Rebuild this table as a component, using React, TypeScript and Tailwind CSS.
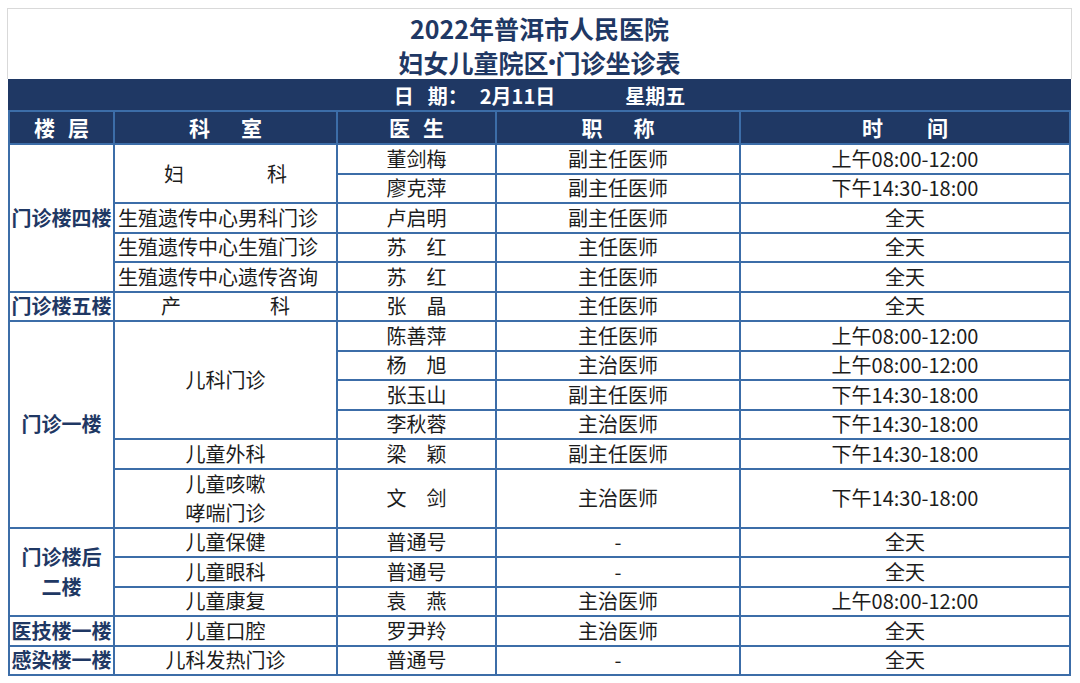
import React from "react";

const navy = "text-[#1f3864]";

type Cell = { pos: string; content: React.ReactNode; kind?: "floor" | "dept" | "deptL" | "text" };

function Spread({ a, b, gap }: { a: string; b: string; gap: string }) {
  return (
    <span className="flex items-center">
      <span>{a}</span>
      <span className={gap}>{b}</span>
    </span>
  );
}

const cells: Cell[] = [
  // floors
  { pos: "col-start-1 row-start-3 row-span-5", content: "门诊楼四楼", kind: "floor" },
  { pos: "col-start-1 row-start-8 row-span-1", content: "门诊楼五楼", kind: "floor" },
  { pos: "col-start-1 row-start-9 row-span-7", content: "门诊一楼", kind: "floor" },
  {
    pos: "col-start-1 row-start-16 row-span-3",
    content: (
      <span className="flex flex-col items-center leading-[30px]">
        <span>门诊楼后</span>
        <span>二楼</span>
      </span>
    ),
    kind: "floor",
  },
  { pos: "col-start-1 row-start-19 row-span-1", content: "医技楼一楼", kind: "floor" },
  { pos: "col-start-1 row-start-20 row-span-1", content: "感染楼一楼", kind: "floor" },

  // departments
  {
    pos: "col-start-2 row-start-3 row-span-2",
    content: (
      <span className="flex w-full justify-between px-[49px]">
        <span>妇</span>
        <span>科</span>
      </span>
    ),
    kind: "dept",
  },
  { pos: "col-start-2 row-start-5 row-span-1", content: "生殖遗传中心男科门诊", kind: "deptL" },
  { pos: "col-start-2 row-start-6 row-span-1", content: "生殖遗传中心生殖门诊", kind: "deptL" },
  { pos: "col-start-2 row-start-7 row-span-1", content: "生殖遗传中心遗传咨询", kind: "deptL" },
  {
    pos: "col-start-2 row-start-8 row-span-1",
    content: (
      <span className="flex w-full justify-between px-[46px]">
        <span>产</span>
        <span>科</span>
      </span>
    ),
    kind: "dept",
  },
  { pos: "col-start-2 row-start-9 row-span-4", content: "儿科门诊", kind: "dept" },
  { pos: "col-start-2 row-start-13 row-span-1", content: "儿童外科", kind: "dept" },
  {
    pos: "col-start-2 row-start-14 row-span-2",
    content: (
      <span className="flex flex-col items-center leading-[29px]">
        <span>儿童咳嗽</span>
        <span>哮喘门诊</span>
      </span>
    ),
    kind: "dept",
  },
  { pos: "col-start-2 row-start-16 row-span-1", content: "儿童保健", kind: "dept" },
  { pos: "col-start-2 row-start-17 row-span-1", content: "儿童眼科", kind: "dept" },
  { pos: "col-start-2 row-start-18 row-span-1", content: "儿童康复", kind: "dept" },
  { pos: "col-start-2 row-start-19 row-span-1", content: "儿童口腔", kind: "dept" },
  { pos: "col-start-2 row-start-20 row-span-1", content: "儿科发热门诊", kind: "dept" },

  // doctors
  { pos: "col-start-3 row-start-3", content: "董剑梅" },
  { pos: "col-start-3 row-start-4", content: "廖克萍" },
  { pos: "col-start-3 row-start-5", content: "卢启明" },
  { pos: "col-start-3 row-start-6", content: "苏\u3000红" },
  { pos: "col-start-3 row-start-7", content: "苏\u3000红" },
  { pos: "col-start-3 row-start-8", content: "张\u3000晶" },
  { pos: "col-start-3 row-start-9", content: "陈善萍" },
  { pos: "col-start-3 row-start-10", content: "杨\u3000旭" },
  { pos: "col-start-3 row-start-11", content: "张玉山" },
  { pos: "col-start-3 row-start-12", content: "李秋蓉" },
  { pos: "col-start-3 row-start-13", content: "梁\u3000颖" },
  { pos: "col-start-3 row-start-14 row-span-2", content: "文\u3000剑" },
  { pos: "col-start-3 row-start-16", content: "普通号" },
  { pos: "col-start-3 row-start-17", content: "普通号" },
  { pos: "col-start-3 row-start-18", content: "袁\u3000燕" },
  { pos: "col-start-3 row-start-19", content: "罗尹羚" },
  { pos: "col-start-3 row-start-20", content: "普通号" },

  // titles
  { pos: "col-start-4 row-start-3", content: "副主任医师" },
  { pos: "col-start-4 row-start-4", content: "副主任医师" },
  { pos: "col-start-4 row-start-5", content: "副主任医师" },
  { pos: "col-start-4 row-start-6", content: "主任医师" },
  { pos: "col-start-4 row-start-7", content: "主任医师" },
  { pos: "col-start-4 row-start-8", content: "主任医师" },
  { pos: "col-start-4 row-start-9", content: "主任医师" },
  { pos: "col-start-4 row-start-10", content: "主治医师" },
  { pos: "col-start-4 row-start-11", content: "副主任医师" },
  { pos: "col-start-4 row-start-12", content: "主治医师" },
  { pos: "col-start-4 row-start-13", content: "副主任医师" },
  { pos: "col-start-4 row-start-14 row-span-2", content: "主治医师" },
  { pos: "col-start-4 row-start-16", content: "-" },
  { pos: "col-start-4 row-start-17", content: "-" },
  { pos: "col-start-4 row-start-18", content: "主治医师" },
  { pos: "col-start-4 row-start-19", content: "主治医师" },
  { pos: "col-start-4 row-start-20", content: "-" },

  // times
  { pos: "col-start-5 row-start-3", content: "上午08:00-12:00" },
  { pos: "col-start-5 row-start-4", content: "下午14:30-18:00" },
  { pos: "col-start-5 row-start-5", content: "全天" },
  { pos: "col-start-5 row-start-6", content: "全天" },
  { pos: "col-start-5 row-start-7", content: "全天" },
  { pos: "col-start-5 row-start-8", content: "全天" },
  { pos: "col-start-5 row-start-9", content: "上午08:00-12:00" },
  { pos: "col-start-5 row-start-10", content: "上午08:00-12:00" },
  { pos: "col-start-5 row-start-11", content: "下午14:30-18:00" },
  { pos: "col-start-5 row-start-12", content: "下午14:30-18:00" },
  { pos: "col-start-5 row-start-13", content: "下午14:30-18:00" },
  { pos: "col-start-5 row-start-14 row-span-2", content: "下午14:30-18:00" },
  { pos: "col-start-5 row-start-16", content: "全天" },
  { pos: "col-start-5 row-start-17", content: "全天" },
  { pos: "col-start-5 row-start-18", content: "上午08:00-12:00" },
  { pos: "col-start-5 row-start-19", content: "全天" },
  { pos: "col-start-5 row-start-20", content: "全天" },
];

function cellClass(kind: Cell["kind"]) {
  switch (kind) {
    case "floor":
      return `justify-center font-bold ${navy}`;
    case "deptL":
      return "justify-start pl-[3px] text-[#1c1c1c]";
    default:
      return "justify-center text-[#1c1c1c]";
  }
}

export default function App() {
  return (
    <div className="min-h-[683px] w-[1080px] bg-white font-['Noto_Sans_CJK_SC','Noto_Sans',sans-serif]">
      <div className="ml-[7px] w-[1065px] pt-[8px]">
        <div
          className={`flex h-[71px] flex-col items-center justify-center border-x border-t border-[#d9d9d9] pt-[1px] text-[25px] font-bold leading-[34px] ${navy}`}
        >
          <div>2022年普洱市人民医院</div>
          <div className="flex items-center">
            <span>妇女儿童院区</span>
            <span className="font-['Liberation_Sans',sans-serif] text-[20px]">•</span>
            <span>门诊坐诊表</span>
          </div>
        </div>
        <div className="mx-[1px] grid grid-cols-[103px_221px_157px_242px_328px] grid-rows-[29px_31px_repeat(18,27.5px)] gap-[2px] bg-[#3c6da8] p-[2px] text-[20px] leading-none">
          <div className="col-span-5 col-start-1 row-start-1 -m-[2px] mb-0 flex items-center justify-center bg-[#1f3864] pt-[2px] font-bold text-white">
            <span>日</span>
            <span className="ml-[14px]">期：</span>
            <span className="ml-[12px]">2月11日</span>
            <span className="ml-[70px]">星期五</span>
          </div>
          <div className="col-start-1 row-start-2 flex items-center justify-center bg-[#1f3864] text-[21px] font-bold text-white">
            <Spread a="楼" b="层" gap="ml-[13px]" />
          </div>
          <div className="col-start-2 row-start-2 flex items-center justify-center bg-[#1f3864] text-[21px] font-bold text-white">
            <Spread a="科" b="室" gap="ml-[31px]" />
          </div>
          <div className="col-start-3 row-start-2 flex items-center justify-center bg-[#1f3864] text-[21px] font-bold text-white">
            <Spread a="医" b="生" gap="ml-[13px]" />
          </div>
          <div className="col-start-4 row-start-2 flex items-center justify-center bg-[#1f3864] text-[21px] font-bold text-white">
            <Spread a="职" b="称" gap="ml-[31px]" />
          </div>
          <div className="col-start-5 row-start-2 flex items-center justify-center bg-[#1f3864] text-[21px] font-bold text-white">
            <Spread a="时" b="间" gap="ml-[44px]" />
          </div>
          {cells.map((c, i) => (
            <div key={i} className={`${c.pos} flex items-center bg-white ${cellClass(c.kind)}`}>
              {c.content}
            </div>
          ))}
        </div>
      </div>
    </div>
  );
}
